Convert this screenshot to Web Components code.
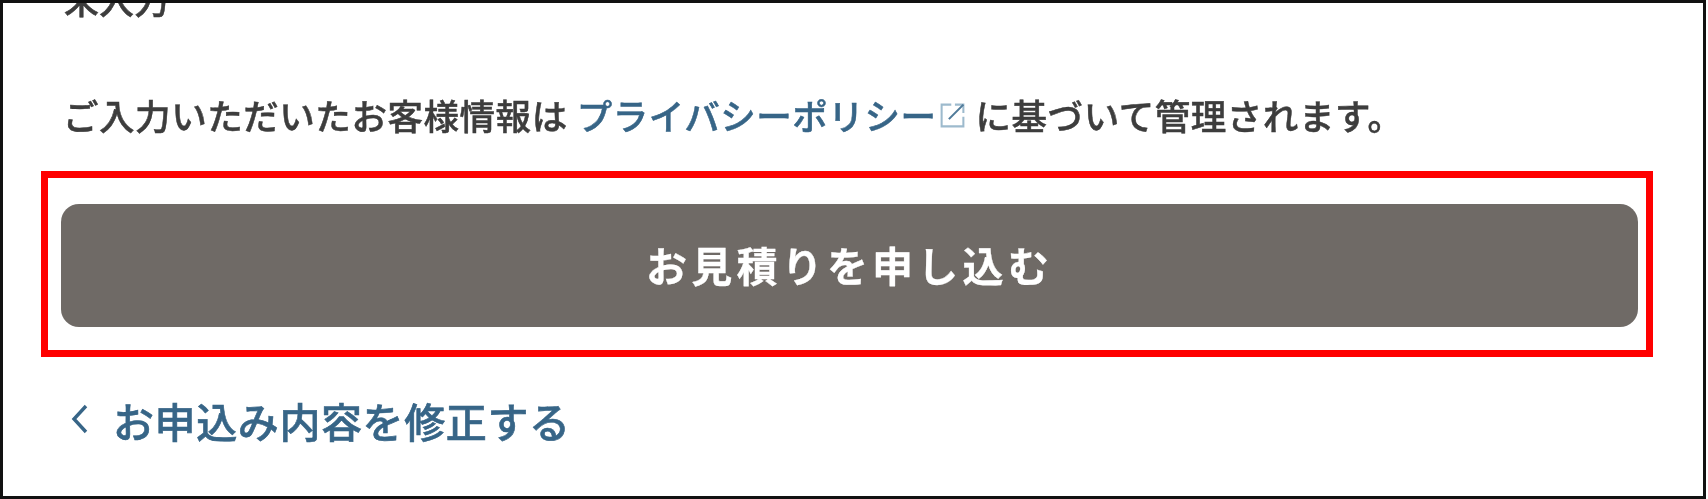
<!DOCTYPE html>
<html lang="ja">
<head>
<meta charset="utf-8">
<title>お見積りを申し込む</title>
<style>
  html, body { margin: 0; height: 100%; background: #fff; }
  body { font-family: "Noto Sans CJK JP", "Noto Sans", sans-serif; }
</style>
</head>
<body>
<quote-frame>
  <quote-value>未入力</quote-value>
  <quote-notice>
    ご入力いただいたお客様情報は
    <quote-link href="#" slot="link">プライバシーポリシー</quote-link>
    <span slot="after">に基づいて管理されます。</span>
  </quote-notice>
  <quote-highlight><quote-submit>お見積りを申し込む</quote-submit></quote-highlight>
  <quote-back>お申込み内容を修正する</quote-back>
</quote-frame>

<script>
  /* Outer black frame, clips the line that runs off the top */
  class QuoteFrame extends HTMLElement {
    constructor() {
      super();
      this.attachShadow({ mode: 'open' }).innerHTML = `
        <style>
          :host {
            display: block;
            box-sizing: border-box;
            height: 499px;
            margin: 0 2px 0 0;
            border: 3px solid #111;
            overflow: hidden;
            background: #fff;
            color: #3d3d3d;
            font-family: "Noto Sans CJK JP", sans-serif;
          }
          .inner {
            display: flex;
            flex-direction: column;
            padding: 0 50px 0 38px;
          }
        </style>
        <div class="inner"><slot></slot></div>
      `;
    }
  }

  class QuoteValue extends HTMLElement {
    constructor() {
      super();
      this.attachShadow({ mode: 'open' }).innerHTML = `
        <style>
          :host {
            display: block;
            margin: -29px 0 0 23px;
            font-size: 35px;
            font-weight: 500;
            line-height: 50px;
            -webkit-text-stroke: .5px currentColor;
            filter: blur(.5px);
          }
        </style>
        <slot></slot>
      `;
    }
  }

  class QuoteNotice extends HTMLElement {
    constructor() {
      super();
      this.attachShadow({ mode: 'open' }).innerHTML = `
        <style>
          :host {
            display: flex;
            align-items: center;
            margin: 66px 0 31px 22px;
            font-size: 35.5px;
            font-weight: 500;
            line-height: 50px;
            letter-spacing: .55px;
            white-space: nowrap;
            -webkit-text-stroke: .5px currentColor;
            filter: blur(.5px);
          }
          .gap { display: inline-block; width: 9px; }
        </style>
        <slot></slot><span class="gap"></span><slot name="link"></slot><span class="gap"></span><slot name="after"></slot>
      `;
    }
  }

  class QuoteLink extends HTMLElement {
    constructor() {
      super();
      this.attachShadow({ mode: 'open' }).innerHTML = `
        <style>
          :host { display: inline-flex; align-items: center; color: #376587; }
          svg { width: 29px; height: 29px; margin: 0 0 0 1px; flex: none; }
        </style>
        <slot></slot>
        <svg viewBox="0 0 24 24" fill="none" stroke="#9dbacd" stroke-width="1.7">
          <path d="M11 3H3v18h18v-8"/>
          <path d="M14 3h7v7" />
          <path d="M21 3 9 15" stroke="#4f7a99"/>
        </svg>
      `;
    }
  }

  /* The red annotation box round the button */
  class QuoteHighlight extends HTMLElement {
    constructor() {
      super();
      this.attachShadow({ mode: 'open' }).innerHTML = `
        <style>
          :host {
            display: block;
            border: 7px solid #f00;
            padding: 26px 8px 23px 13px;
          }
        </style>
        <slot></slot>
      `;
    }
  }

  class QuoteSubmit extends HTMLElement {
    constructor() {
      super();
      this.attachShadow({ mode: 'open' }).innerHTML = `
        <style>
          :host { display: block; }
          button {
            display: block;
            width: 100%;
            height: 123px;
            padding: 0 0 4px;
            border: 0;
            border-radius: 18px;
            background: #6f6a66;
            color: #fff;
            font: 700 41px "Noto Sans CJK JP", sans-serif;
            letter-spacing: 4.2px;
            -webkit-text-stroke: .3px currentColor;
          }
          span { filter: blur(.5px); }
        </style>
        <button type="button"><span><slot></slot></span></button>
      `;
    }
  }

  class QuoteBack extends HTMLElement {
    constructor() {
      super();
      this.attachShadow({ mode: 'open' }).innerHTML = `
        <style>
          :host {
            display: flex;
            align-items: center;
            gap: 24px;
            margin: 38px 0 0 29px;
            color: #376587;
            font-size: 41px;
            font-weight: 500;
            line-height: 50px;
            letter-spacing: .6px;
            -webkit-text-stroke: .6px currentColor;
            filter: blur(.5px);
          }
          svg { width: 19px; height: 32px; flex: none; margin-top: -2px; }
        </style>
        <svg viewBox="0 0 19 32" fill="none" stroke="currentColor" stroke-width="3.4">
          <path d="M16 3 4 16l12 13"/>
        </svg>
        <slot></slot>
      `;
    }
  }

  customElements.define('quote-frame', QuoteFrame);
  customElements.define('quote-value', QuoteValue);
  customElements.define('quote-notice', QuoteNotice);
  customElements.define('quote-link', QuoteLink);
  customElements.define('quote-highlight', QuoteHighlight);
  customElements.define('quote-submit', QuoteSubmit);
  customElements.define('quote-back', QuoteBack);
</script>
</body>
</html>
